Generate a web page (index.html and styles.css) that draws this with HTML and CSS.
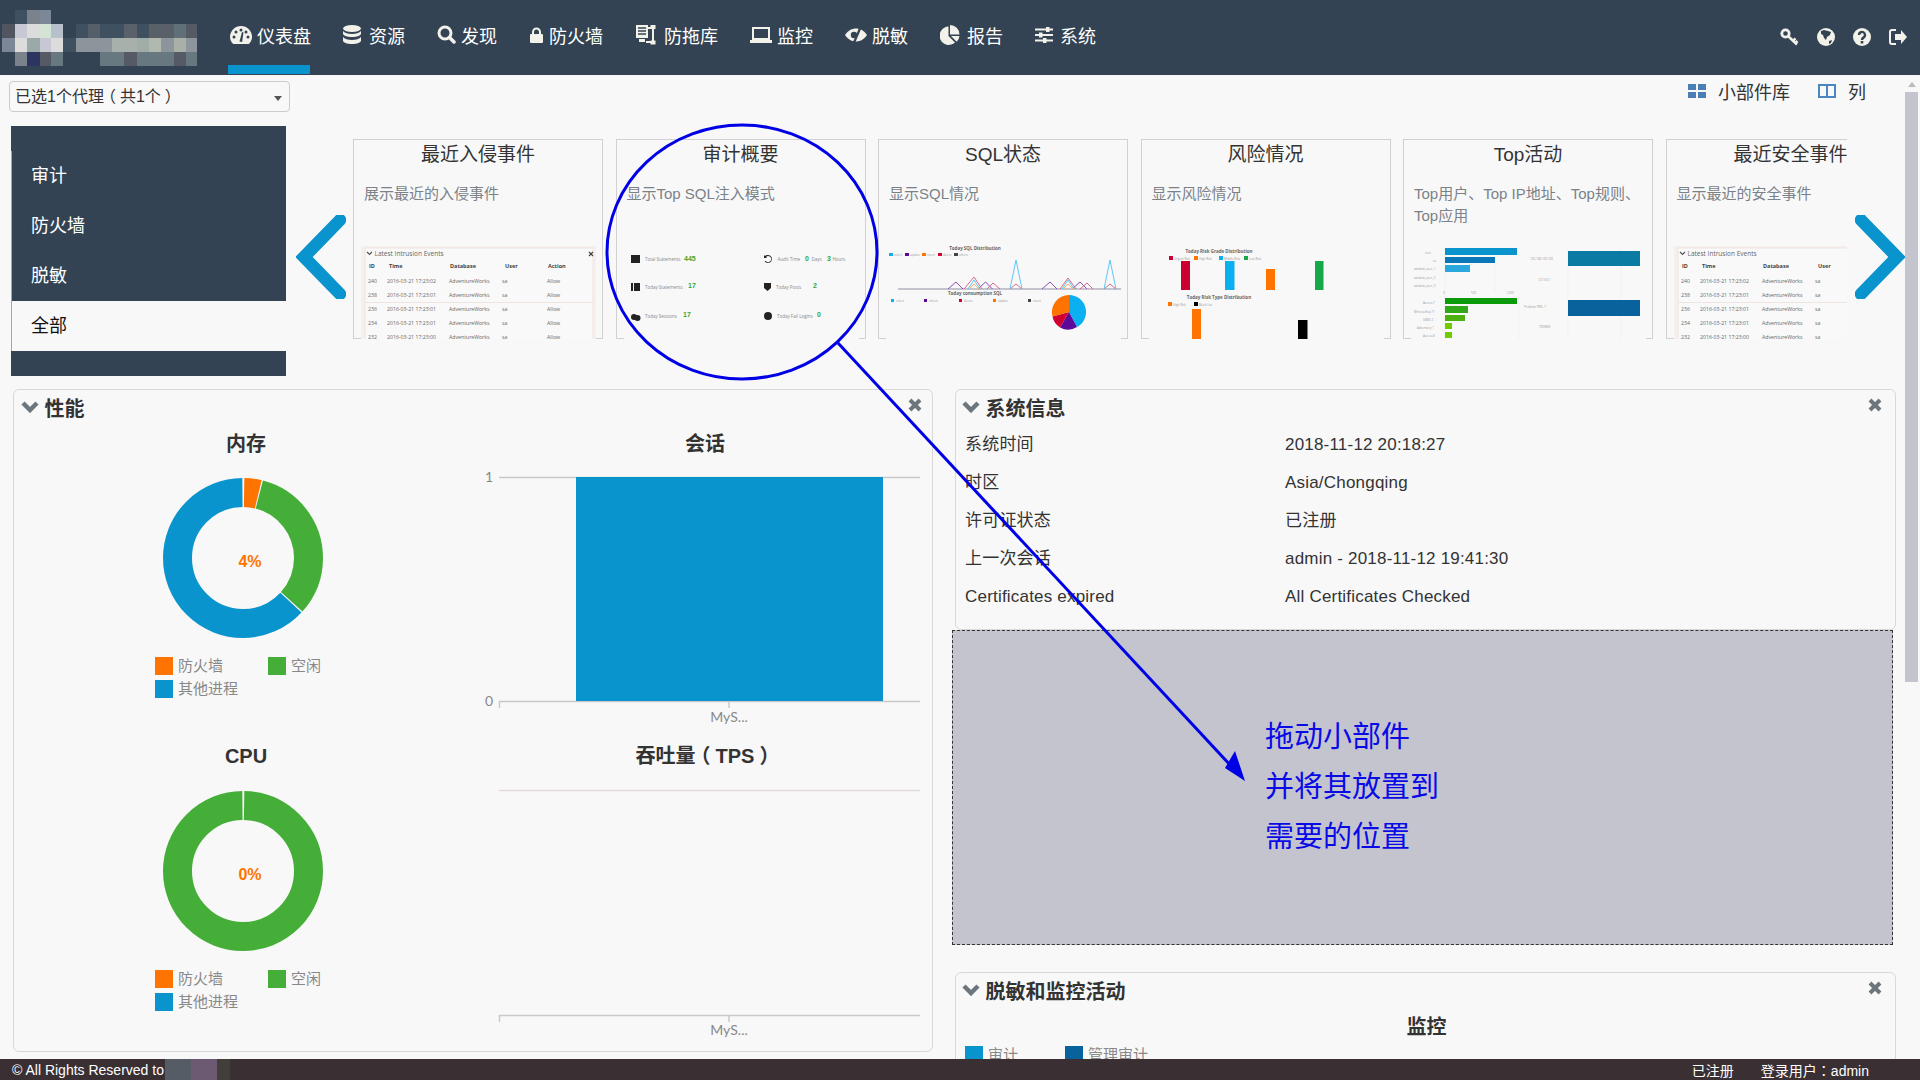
FILE: index.html
```html
<!DOCTYPE html>
<html lang="zh-CN">
<head>
  <meta charset="UTF-8">
  <meta name="viewport" content="width=device-width, initial-scale=1.0">
  <title>仪表盘</title>
  <link rel="stylesheet" href="styles.css">
</head>
<body>
  <header class="topbar">
    <svg class="logo" width="200" height="60" viewBox="0 0 200 60">
      <rect x="15" y="2" width="12" height="14" fill="#3f5060"/><rect x="27" y="2" width="13" height="14" fill="#7a828c"/><rect x="40" y="2" width="11" height="14" fill="#7c8797"/>
      <rect x="2" y="16" width="13" height="14" fill="#51555f"/><rect x="15" y="16" width="12" height="14" fill="#c8c8d4"/><rect x="27" y="16" width="13" height="14" fill="#dcdcdc"/><rect x="40" y="16" width="11" height="14" fill="#d4e4d4"/><rect x="51" y="16" width="12" height="14" fill="#b8c0cc"/>
      <rect x="76" y="16" width="12" height="14" fill="#3f5060"/><rect x="88" y="16" width="12" height="14" fill="#555f6a"/><rect x="100" y="16" width="24" height="14" fill="#3f5060"/><rect x="124" y="16" width="13" height="14" fill="#5a616a"/><rect x="137" y="16" width="12" height="14" fill="#3f5060"/><rect x="149" y="16" width="25" height="14" fill="#5a6068"/><rect x="174" y="16" width="12" height="14" fill="#607078"/><rect x="186" y="16" width="11" height="14" fill="#555a64"/>
      <rect x="2" y="30" width="13" height="14" fill="#7c8696"/><rect x="15" y="30" width="12" height="14" fill="#dcdcdc"/><rect x="27" y="30" width="13" height="14" fill="#9aaaa8"/><rect x="40" y="30" width="11" height="14" fill="#c8c8d4"/><rect x="51" y="30" width="12" height="14" fill="#dcdcdc"/><rect x="63" y="30" width="13" height="14" fill="#3f5060"/>
      <rect x="76" y="30" width="36" height="14" fill="#8c949c"/><rect x="112" y="30" width="25" height="14" fill="#a8b0ac"/><rect x="137" y="30" width="12" height="14" fill="#a0aca8"/><rect x="149" y="30" width="12" height="14" fill="#b0b8b0"/><rect x="161" y="30" width="13" height="14" fill="#8c949c"/><rect x="174" y="30" width="12" height="14" fill="#a8b0a8"/><rect x="186" y="30" width="11" height="14" fill="#8c949c"/>
      <rect x="15" y="44" width="12" height="14" fill="#7a828c"/><rect x="27" y="44" width="13" height="14" fill="#2c3560"/><rect x="40" y="44" width="11" height="14" fill="#555a64"/><rect x="51" y="44" width="12" height="14" fill="#687880"/>
      <rect x="100" y="44" width="24" height="14" fill="#687880"/><rect x="124" y="44" width="13" height="14" fill="#555a64"/><rect x="137" y="44" width="37" height="14" fill="#687880"/><rect x="174" y="44" width="12" height="14" fill="#555a64"/><rect x="186" y="44" width="11" height="14" fill="#687880"/>
    </svg>
    <nav class="nav">
      <a class="nav-item active">
        <svg class="ico" width="22" height="18" viewBox="0 0 22 18"><path d="M3.200 18C1.200 16 0 13.600 0 11a11 11 0 0 1 22 0c0 2.600-1.200 5-3.200 7z"/><g class="cut"><circle cx="4" cy="11" r="1.500"/><circle cx="6" cy="6" r="1.500"/><circle cx="11" cy="4" r="1.500"/><circle cx="16" cy="6" r="1.500"/><circle cx="18" cy="11" r="1.500"/><path d="M9.500 15.500L12 6l1.500.4-1.400 9.600z"/></g></svg>
        仪表盘
      </a>
      <a class="nav-item">
        <svg class="ico" width="21" height="20" viewBox="0 0 21 20"><ellipse cx="9" cy="3.500" rx="9" ry="3.500"/><path d="M0 6v2.500c0 2 4 3.500 9 3.500s9-1.500 9-3.500V6c-1.500 2-5 3-9 3S1.500 8 0 6z"/><path d="M0 12v3.500c0 2 4 3.500 9 3.500s9-1.500 9-3.500V12c-1.500 2-5 3-9 3s-7.500-1-9-3z"/></svg>
        资源
      </a>
      <a class="nav-item">
        <svg class="ico" width="19" height="19" viewBox="0 0 19 19"><circle cx="8" cy="8" r="6" class="line" stroke-width="3"/><path d="M12.500 12.500L17 17" class="line" stroke-width="3.500" stroke-linecap="round"/></svg>
        发现
      </a>
      <a class="nav-item">
        <svg class="ico" width="15" height="16" viewBox="0 0 15 16"><rect x="1" y="7" width="13" height="9" rx="1"/><path d="M4 7V5a3.500 3.500 0 0 1 7 0v2" class="line" stroke-width="2"/></svg>
        防火墙
      </a>
      <a class="nav-item">
        <svg class="ico" width="24" height="22" viewBox="0 0 24 22"><path d="M1 1h12v13H1z"/><path class="cut-line" d="M3 4h8M3 7h8M3 10h8" stroke-width="1.400"/><path d="M13 4h5v14h-7" class="line" stroke-width="2"/><rect x="15.500" y="1" width="5" height="4"/><rect x="15.500" y="16.500" width="5" height="4"/><path d="M4 15h6v3H4z"/></svg>
        防拖库
      </a>
      <a class="nav-item">
        <svg class="ico" width="22" height="16" viewBox="0 0 22 16"><rect x="3" y="1" width="16" height="11" class="line" stroke-width="2"/><rect x="0" y="13" width="22" height="3"/></svg>
        监控
      </a>
      <a class="nav-item">
        <svg class="ico" width="22" height="14" viewBox="0 0 22 14"><path d="M0 7C3 2.500 7 .5 11 .5S19 2.500 22 7c-3 4.500-7 6.500-11 6.500S3 11.500 0 7z"/><g class="cut"><circle cx="9" cy="7" r="3.200"/><path d="M8 14l6-14h2.500l-6 14z"/></g></svg>
        脱敏
      </a>
      <a class="nav-item">
        <svg class="ico" width="22" height="20" viewBox="0 0 22 20"><path d="M8.500 1.500v9.500l6.500 6.500A9.200 9.200 0 1 1 8.500 1.500z"/><path d="M10 0a9.500 9.500 0 0 1 9.500 9.500H10z"/><path d="M11 11h8.500a9 9 0 0 1-2.800 5.700z"/></svg>
        报告
      </a>
      <a class="nav-item">
        <svg class="ico" width="20" height="16" viewBox="0 0 20 16"><path d="M0 2.500h18M0 8h18M0 13.500h18" class="line" stroke-width="2"/><rect x="11" y="0" width="3.500" height="5"/><rect x="4" y="5.500" width="3.500" height="5"/><rect x="8" y="11" width="3.500" height="5"/></svg>
        系统
      </a>
    </nav>
    <div class="top-icons">
      <svg class="ico" width="19" height="18" viewBox="0 0 19 18"><circle cx="5.500" cy="5.500" r="3.700" class="line" stroke-width="2.800"/><path d="M8.500 8.500L17 16.500M13 12.800l2.500-2.500M15.500 15l2-2" class="line" stroke-width="2.500"/></svg>
      <svg class="ico" width="18" height="18" viewBox="0 0 18 18"><circle cx="9" cy="9" r="9"/><path class="cut" d="M4 3l3-1 4 1 3 1-1 3-3 2-1 3-2-2-1-3-2-1zM12 13l3-1-1 3-2 1z"/></svg>
      <svg class="ico" width="18" height="18" viewBox="0 0 18 18"><circle cx="9" cy="9" r="9"/><path class="cut-line" d="M6 7a3 3 0 1 1 4.700 2.400C9.700 10 9 10.600 9 12" stroke-width="2.400"/><rect class="cut" x="7.700" y="13" width="2.600" height="2.500"/></svg>
      <svg class="ico" width="18" height="16" viewBox="0 0 18 16"><path d="M7 1H3a2 2 0 0 0-2 2v10a2 2 0 0 0 2 2h4" class="line" stroke-width="2"/><path d="M6 5h6V1l6 7-6 7v-4H6z"/></svg>
    </div>
  </header>

  <main class="main">
    <div class="toolbar">
      <div class="proxy-select">已选1个代理<span class="p-open">（</span>共1个<span class="p-close">）</span><span class="caret"></span></div>
      <div class="tools">
        <a class="tool">
          <svg width="18" height="14" viewBox="0 0 18 14" fill="#4a7fb5"><rect width="8" height="6"/><rect x="10" width="8" height="6"/><rect y="8" width="8" height="6"/><rect x="10" y="8" width="8" height="6"/></svg>
          小部件库
        </a>
        <a class="tool">
          <svg width="18" height="14" viewBox="0 0 18 14" fill="none" stroke="#4a86c0" stroke-width="2"><rect x="1" y="1" width="16" height="12"/><path d="M9 1v12"/></svg>
          列
        </a>
      </div>
    </div>

    <section class="gallery">
      <div class="side">
        <ul class="side-list">
          <li>审计</li>
          <li>防火墙</li>
          <li>脱敏</li>
          <li class="current">全部</li>
        </ul>
      </div>
      <div class="arrow arrow-prev">
        <svg width="50" height="84" viewBox="0 0 50 84"><path d="M44 5L8 42l36 37" class="chev"/></svg>
      </div>
      <div class="cards">
        <article class="card">
          <h3>最近入侵事件</h3>
          <p>展示最近的入侵事件</p>
          <svg class="thumb" width="235" height="93" viewBox="0 0 235 93">
            <g id="thumb-table">
              <rect x="0" y="0" width="235" height="93" fill="#f6efec"/>
              <rect x="4" y="2" width="228" height="93" fill="#f9f9f9" stroke="#f0e4e0"/>
              <path d="M6 6l2.500 2.500L11 6" fill="none" stroke="#555" stroke-width="1.200"/>
              <text class="mini-title" x="13.500" y="10">Latest Intrusion Events</text>
              <path d="M228 6l4 4M232 6l-4 4" stroke="#444" stroke-width="1.200"/>
              <g class="mini-head">
                <text x="8" y="22">ID</text><text x="28" y="22">Time</text><text x="89" y="22">Database</text><text x="144" y="22">User</text><text x="187" y="22">Action</text>
              </g>
              <g class="mini-row">
                <text x="7" y="37">240</text><text x="26" y="37">2016-03-21 17:23:02</text><text x="88" y="37">AdventureWorks</text><text x="141" y="37">sa</text><text x="186" y="37">Allow</text>
                <text x="7" y="51">238</text><text x="26" y="51">2016-03-21 17:23:01</text><text x="88" y="51">AdventureWorks</text><text x="141" y="51">sa</text><text x="186" y="51">Allow</text>
                <text x="7" y="65">236</text><text x="26" y="65">2016-03-21 17:23:01</text><text x="88" y="65">AdventureWorks</text><text x="141" y="65">sa</text><text x="186" y="65">Allow</text>
                <text x="7" y="79">234</text><text x="26" y="79">2016-03-21 17:23:01</text><text x="88" y="79">AdventureWorks</text><text x="141" y="79">sa</text><text x="186" y="79">Allow</text>
                <text x="7" y="93">232</text><text x="26" y="93">2016-03-21 17:23:00</text><text x="88" y="93">AdventureWorks</text><text x="141" y="93">sa</text><text x="186" y="93">Allow</text>
              </g>
              <path d="M4 56.500H232" stroke="#f0e4e0"/>
            </g>
          </svg>
        </article>
        <article class="card">
          <h3>审计概要</h3>
          <p>显示Top SQL注入模式</p>
          <svg class="thumb" width="235" height="93" viewBox="0 0 235 93">
            <g fill="#222">
              <path d="M7 9h9v8H7z"/><path d="M7 37h2v8H7zM10 37h6v8h-6z"/><circle cx="10" cy="71" r="3"/><circle cx="13.500" cy="72" r="3"/>
              <path d="M144 9a4 4 0 1 1-3.500 6h1.300a3 3 0 1 0 .2-4l1 1h-3v-3l1 1a4 4 0 0 1 3-1z"/><path d="M140 37h7v5l-3.500 3-3.500-3z"/><circle cx="144" cy="70" r="4"/>
            </g>
            <g class="mini-label">
              <text x="21" y="15">Total Statements</text><text x="21" y="43">Today Statements</text><text x="21" y="72">Today Sessions</text>
              <text x="153.500" y="15">Audit Time</text><text x="187.500" y="15">Days</text><text x="208.500" y="15">Hours</text>
              <text x="152" y="43">Today Posts</text><text x="153" y="72">Today Fail Logins</text>
            </g>
            <g class="mini-num">
              <text x="60" y="15">445</text><text x="64" y="42">17</text><text x="59" y="71">17</text>
              <text x="181" y="15">0</text><text x="203" y="15">3</text><text x="189" y="42">2</text><text x="193" y="71">0</text>
            </g>
          </svg>
        </article>
        <article class="card">
          <h3>SQL状态</h3>
          <p>显示SQL情况</p>
          <svg class="thumb" width="235" height="93" viewBox="0 0 235 93">
            <text class="mini-chart" x="89" y="4">Today SQL Distribution</text>
            <g><rect x="3" y="7" width="4" height="3" fill="#0ab0f0"/><rect x="19" y="7" width="4" height="3" fill="#5b0a9c"/><rect x="36" y="7" width="4" height="3" fill="#ff7300"/><rect x="52" y="7" width="4" height="3" fill="#d00030"/><rect x="68" y="7" width="4" height="3" fill="#444"/></g>
            <g class="mini-axis"><text x="8" y="10">select</text><text x="24" y="10">update</text><text x="41" y="10">insert</text><text x="57" y="10">delete</text><text x="73" y="10">others</text></g>
            <path d="M12 43H235" stroke="#c3c4ce" stroke-width="2"/>
            <g fill="none" stroke-width="1">
              <path d="M62 43l8-7 7 7M92 43l7.500-7 7 7M156 43l8-7 7 7M186 43l8-7 7 7" stroke="#8a4fb0"/>
              <path d="M78 43l10-12 8 12M101 43l6-6 7 6M124 43l6-5 6 5M174 43l8-11 8 11M194 43l7-6 6 6M218 43l6-5 6 5" stroke="#d86a8a"/>
              <path d="M124 43l6-29 6 29M218 43l6-29 6 29M82 43l6-9 6 9M176 43l6-9 6 9" stroke="#5cc8f5"/>
              <path d="M83 43l5-5 5 5M177 43l5-5 5 5" stroke="#ffb060"/>
            </g>
            <text class="mini-chart" x="89" y="49">Today consumption SQL</text>
            <g><rect x="5" y="53" width="3" height="3" fill="#0ab0f0"/><rect x="38" y="53" width="3" height="3" fill="#5b0a9c"/><rect x="73" y="53" width="3" height="3" fill="#d00030"/><rect x="107" y="53" width="3" height="3" fill="#ff7300"/><rect x="142" y="53" width="3" height="3" fill="#444"/></g>
            <g class="mini-axis"><text x="10" y="56">select</text><text x="43" y="56">others</text><text x="78" y="56">delete</text><text x="112" y="56">update</text><text x="147" y="56">insert</text></g>
            <path d="M183 66V49a17 17 0 0 1 8 32z" fill="#0ab0f0"/>
            <path d="M183 66l8 15a17 17 0 0 1-17 .5z" fill="#5b0a9c"/>
            <path d="M183 66l-9 15.500a17 17 0 0 1-7.500-11z" fill="#d00030"/>
            <path d="M183 66l-16.500 4.500A17 17 0 0 1 183 49z" fill="#ff7300"/>
          </svg>
        </article>
        <article class="card">
          <h3>风险情况</h3>
          <p>显示风险情况</p>
          <svg class="thumb" width="235" height="93" viewBox="0 0 235 93">
            <text class="mini-chart" x="70" y="7">Today Risk Grade Distribution</text>
            <rect x="20" y="10" width="4" height="4" fill="#cc0030"/><rect x="45" y="10" width="4" height="4" fill="#ff7300"/><rect x="70" y="10" width="4" height="4" fill="#0ab0f0"/><rect x="95" y="10" width="4" height="4" fill="#17a84a"/>
            <g class="mini-axis"><text x="25" y="13.500">Urgent Risk</text><text x="50" y="13.500">High Risk</text><text x="75" y="13.500">Middle Risk</text><text x="100" y="13.500">Low Risk</text></g>
            <rect x="32" y="15" width="9" height="29" fill="#cc0030"/><rect x="76" y="15" width="9.500" height="29" fill="#0ab0f0"/><rect x="117" y="23" width="9" height="21" fill="#ff7300"/><rect x="166" y="15" width="8.500" height="29" fill="#17a84a"/>
            <text class="mini-chart" x="70" y="53">Today Risk Type Distribution</text>
            <rect x="19" y="56" width="4" height="4" fill="#ff7300"/><rect x="45" y="56" width="4" height="4" fill="#000"/>
            <g class="mini-axis"><text x="24" y="59.500">High Risk</text><text x="50" y="59.500">Block List</text></g>
            <rect x="43" y="63" width="9" height="30" fill="#ff7300"/><rect x="149" y="74" width="9.500" height="19" fill="#000"/>
          </svg>
        </article>
        <article class="card">
          <h3>Top活动</h3>
          <p>Top用户、Top IP地址、Top规则、Top应用</p>
          <svg class="thumb" width="235" height="93" viewBox="0 0 235 93">
            <path d="M34 2V93M84 2V46M108 48V93M157 2V93M210 2V93" stroke="#ecece4" stroke-width=".6"/>
            <rect x="34" y="2" width="72" height="7" fill="#0a94ce"/><rect x="34" y="11" width="50" height="6" fill="#0a78b8"/><rect x="34" y="19" width="25" height="7" fill="#2aa8de"/>
            <rect x="34" y="52" width="72" height="6" fill="#0a9a0a"/><rect x="34" y="60" width="23" height="7" fill="#30a818"/><rect x="34" y="69" width="20" height="6" fill="#4cb010"/><rect x="34" y="77" width="7" height="6" fill="#70cc00"/><rect x="34" y="86" width="7" height="6" fill="#70cc00"/>
            <rect x="157" y="5" width="72" height="15" fill="#0a7ca4"/><rect x="157" y="54" width="72" height="16" fill="#08639c"/>
            <g class="mini-axis">
              <text x="14" y="8">root</text><text x="22" y="16">sa</text><text x="3" y="24">window_user_1</text><text x="3" y="33">window_user_2</text><text x="3" y="41">window_user_3</text>
              <text x="32" y="48">0</text><text x="60" y="48">500</text><text x="95" y="48">1,000</text>
              <text x="12" y="58">Access 7</text><text x="3" y="67">Microsoftsq 71</text><text x="12" y="75">SSMS 2</text><text x="6" y="83">Adventury 1</text><text x="12" y="91">Access 8</text>
              <text x="119" y="14">192.168.100.100</text><text x="127" y="35">127.0.0.1</text><text x="113" y="62">Problem PRO. T</text><text x="128" y="82">TEDMSE</text>
            </g>
          </svg>
        </article>
        <article class="card">
          <h3>最近安全事件</h3>
          <p>显示最近的安全事件</p>
          <svg class="thumb" width="235" height="93" viewBox="0 0 235 93"><use href="#thumb-table"/></svg>
        </article>
      </div>
      <div class="arrow arrow-next">
        <svg width="50" height="84" viewBox="0 0 50 84"><path d="M6 5l36 37L6 79" class="chev"/></svg>
      </div>
    </section>

    <section class="board">
      <div class="panel panel-perf">
        <div class="panel-head">
          <svg class="fold" width="18" height="12" viewBox="0 0 18 12"><path d="M2 2l7 7 7-7"/></svg>
          <h2>性能</h2>
          <svg class="close" width="14" height="14" viewBox="0 0 14 14"><path d="M2 2l10 10M12 2L2 12"/></svg>
        </div>
        <div class="perf">
          <div class="perf-col">
            <div class="chart">
              <h4>内存</h4>
              <svg class="donut" width="464" height="160" viewBox="0 0 464 160">
                <g class="ring" transform="rotate(-90 229 80)">
                  <circle cx="229" cy="80" r="65.500" pathLength="360" stroke="#ff7300" stroke-dasharray="12.500 347.500" stroke-dashoffset="-1"/>
                  <circle cx="229" cy="80" r="65.500" pathLength="360" stroke="#44ae38" stroke-dasharray="117.500 242.500" stroke-dashoffset="-14.500"/>
                  <circle cx="229" cy="80" r="65.500" pathLength="360" stroke="#0a94ce" stroke-dasharray="226.500 133.500" stroke-dashoffset="-133"/>
                </g>
                <text class="pct" x="236" y="89">4%</text>
              </svg>
              <ul class="legend legend-grid">
                <li><span class="swatch c-orange"></span>防火墙</li>
                <li><span class="swatch c-green"></span>空闲</li>
                <li><span class="swatch c-blue"></span>其他进程</li>
              </ul>
            </div>
            <div class="chart">
              <h4>CPU</h4>
              <svg class="donut" width="464" height="160" viewBox="0 0 464 160">
                <g class="ring" transform="rotate(-90 229 80)">
                  <circle cx="229" cy="80" r="65.500" pathLength="360" stroke="#44ae38" stroke-dasharray="358.500 1.500" stroke-dashoffset="-1"/>
                </g>
                <text class="pct" x="236" y="89">0%</text>
              </svg>
              <ul class="legend legend-grid">
                <li><span class="swatch c-orange"></span>防火墙</li>
                <li><span class="swatch c-green"></span>空闲</li>
                <li><span class="swatch c-blue"></span>其他进程</li>
              </ul>
            </div>
          </div>
          <div class="perf-col">
            <div class="chart">
              <h4>会话</h4>
              <svg class="bars" width="454" height="285" viewBox="0 0 454 285">
                <path d="M21 22.500H442M21 246.500H442" class="axis"/>
                <path d="M21.500 246v7M251 246v7" class="axis"/>
                <rect x="98" y="22" width="307" height="224" fill="#0a94ce"/>
                <text class="tick" x="7" y="27">1</text>
                <text class="tick" x="7" y="251">0</text>
                <text class="tick mid" x="251" y="267">MyS...</text>
              </svg>
            </div>
            <div class="chart">
              <h4>吞吐量<span class="p-open">（</span>TPS<span class="p-close">）</span></h4>
              <svg class="bars" width="454" height="285" viewBox="0 0 454 285">
                <path d="M21 21.500H442" class="axis pale"/>
                <path d="M21 246.500H442M21.500 246v7M251 246v7" class="axis"/>
                <text class="tick mid" x="251" y="265.500">MyS...</text>
              </svg>
            </div>
          </div>
        </div>
      </div>

      <div class="stack">
        <div class="panel panel-info">
          <div class="panel-head">
            <svg class="fold" width="18" height="12" viewBox="0 0 18 12"><path d="M2 2l7 7 7-7"/></svg>
            <h2>系统信息</h2>
            <svg class="close" width="14" height="14" viewBox="0 0 14 14"><path d="M2 2l10 10M12 2L2 12"/></svg>
          </div>
          <dl class="info">
            <dt>系统时间</dt><dd>2018-11-12 20:18:27</dd>
            <dt>时区</dt><dd>Asia/Chongqing</dd>
            <dt>许可证状态</dt><dd>已注册</dd>
            <dt>上一次会话</dt><dd>admin - 2018-11-12 19:41:30</dd>
            <dt>Certificates expired</dt><dd>All Certificates Checked</dd>
          </dl>
        </div>
        <div class="dropzone">拖动小部件<br>并将其放置到<br>需要的位置</div>
        <div class="panel panel-mask">
          <div class="panel-head">
            <svg class="fold" width="18" height="12" viewBox="0 0 18 12"><path d="M2 2l7 7 7-7"/></svg>
            <h2>脱敏和监控活动</h2>
            <svg class="close" width="14" height="14" viewBox="0 0 14 14"><path d="M2 2l10 10M12 2L2 12"/></svg>
          </div>
          <h4>监控</h4>
          <ul class="legend legend-row">
            <li><span class="swatch c-blue"></span>审计</li>
            <li><span class="swatch c-navy"></span>管理审计</li>
          </ul>
        </div>
      </div>
    </section>
  </main>

  <div class="scrollbar"><span class="scroll-up"></span><span class="scroll-thumb"></span></div>

  <!-- callout drawn over the page -->
  <svg class="callout" width="1920" height="1080" viewBox="0 0 1920 1080">
    <ellipse cx="742" cy="252" rx="135" ry="127"/>
    <path d="M838 343L1232 767"/>
    <path class="head" d="M1245 781L1225 768L1235 751z"/>
  </svg>

  <footer class="footer">
    <span>© All Rights Reserved to</span>
    <span class="blur"><i></i><i></i><i></i></span>
    <span class="foot-right">已注册</span>
    <span class="foot-user">登录用户<span class="tc" lang="zh-TW">：</span>admin</span>
  </footer>
</body>
</html>
```
FILE: styles.css
```css
* {
  box-sizing: border-box;
}

html, body {
  margin: 0;
  height: 100%;
  overflow: hidden;
}

body {
  font-family: "Liberation Sans", "Noto Sans CJK SC", sans-serif;
  background-color: #f8f8f8;
  color: #333;
}

ul {
  list-style: none;
  margin: 0;
  padding: 0;
}

/* centred fullwidth punctuation */
.tc {
  font-family: "Noto Sans CJK TC", sans-serif;
  line-height: 1;
}

.p-open {
  margin: 0 .25em 0 -.25em;
}

.p-close {
  margin: 0 -.25em 0 .25em;
}

/* top bar */
.topbar {
  height: 75px;
  background-color: #334353;
  display: flex;
  align-items: center;
  padding-right: 13px;
}

.logo {
  flex: none;
  margin-right: 30px;
}

.nav {
  display: flex;
  gap: 32px;
  height: 100%;
}

.nav-item {
  position: relative;
  display: flex;
  align-items: center;
  color: #fff;
  font-size: 18px;
  white-space: nowrap;
  padding-bottom: 6px;
}

.nav-item .ico {
  margin-right: 5px;
}

.nav-item.active::after {
  content: "";
  position: absolute;
  left: -2px;
  right: 1px;
  bottom: 1px;
  height: 9px;
  background-color: #0a94ce;
}

.top-icons {
  margin-left: auto;
  display: flex;
  align-items: center;
  gap: 18px;
  padding-bottom: 1px;
  margin-top: -1px;
}

.ico {
  fill: #f2f1ea;
  flex: none;
}

.ico .line {
  fill: none;
  stroke: #f2f1ea;
}

.ico .cut {
  fill: #334353;
}

.ico .cut-line {
  fill: none;
  stroke: #334353;
}

/* toolbar */
.main {
  height: 1005px;
  overflow: hidden;
}

.toolbar {
  display: flex;
  align-items: center;
  margin-top: 6px;
  height: 31px;
  padding-left: 9px;
}

.proxy-select {
  position: relative;
  width: 281px;
  height: 31px;
  line-height: 29px;
  padding-left: 5px;
  font-size: 16px;
  border: 1px solid #ccc;
  border-radius: 4px;
}

.caret {
  position: absolute;
  right: 7px;
  top: 14px;
  border-left: 4px solid transparent;
  border-right: 4px solid transparent;
  border-top: 5px solid #555;
}

.tools {
  margin-left: auto;
  display: flex;
  gap: 28px;
  padding-right: 54px;
  margin-top: -11px;
}

.tool {
  display: flex;
  align-items: center;
  gap: 12px;
  font-size: 18px;
}

/* widget gallery */
.gallery {
  display: flex;
  height: 250px;
  margin-top: 14px;
  padding-left: 11px;
}

.side {
  flex: none;
  width: 275px;
  background-color: #334353;
  padding: 25px 0;
}

.side-list {
  border-left: 1px solid #8dc63f;
}

.side-list li {
  height: 50px;
  line-height: 50px;
  padding-left: 19px;
  font-size: 18px;
  color: #fff;
}

.side-list li.current {
  background-color: #f8f8f8;
  color: #111;
}

.arrow {
  flex: none;
  padding-top: 89px;
}

.arrow-prev {
  width: 67px;
  padding-left: 10px;
}

.arrow-next {
  width: 58px;
  padding-left: 8px;
}

.chev {
  fill: none;
  stroke: #0a94ce;
  stroke-width: 12.500;
  stroke-linecap: round;
  stroke-linejoin: miter;
}

.cards {
  flex: none;
  width: 1494px;
  height: 200px;
  margin-top: 13px;
  display: flex;
  gap: 12.5px;
  overflow: hidden;
}

.card {
  flex: none;
  width: 250px;
  height: 200px;
  border: 1px solid #d0d0d0;
  display: flex;
  flex-direction: column;
}

.card h3 {
  margin: 1px 0 0;
  font-size: 19px;
  font-weight: 400;
  line-height: 28px;
  text-align: center;
}

.card p {
  margin: 14px 0 0;
  padding: 0 10px;
  font-size: 15px;
  line-height: 22px;
  color: #7a8288;
}

.thumb {
  display: block;
  flex: none;
  margin: auto 0 -1px 7px;
  background-color: #f8f8f8;
}

.mini-title, .mini-label, .mini-head, .mini-row, .mini-chart, .mini-axis {
  font-family: "Open Sans", sans-serif;
}

.mini-title {
  font-size: 6.500px;
  fill: #666;
}

.mini-head {
  font-size: 5.500px;
  font-weight: 700;
  fill: #444;
}

.mini-row {
  font-size: 5.200px;
  fill: #666;
}

.mini-label {
  font-size: 4.500px;
  fill: #888;
}

.mini-num {
  font-size: 7px;
  font-weight: 700;
  fill: #3aa53a;
}

.mini-chart {
  font-size: 4.500px;
  font-weight: 700;
  fill: #666;
  text-anchor: middle;
}

.mini-axis {
  font-size: 3px;
  fill: #999;
}

/* panels */
.board {
  display: grid;
  grid-template-columns: 920px 941px;
  column-gap: 22px;
  margin-top: 13px;
  padding-left: 13px;
}

.panel {
  border: 1px solid #d8d8d8;
  border-radius: 6px;
  background-color: #f8f8f8;
}

.panel-perf {
  height: 663px;
}

.panel-info {
  height: 241px;
}

.panel-mask {
  height: 200px;
  margin-top: 27px;
}

.panel-head {
  display: flex;
  align-items: center;
  height: 41px;
  padding: 0 10px 7px 7px;
  gap: 5.500px;
}

.panel-info .panel-head, .panel-mask .panel-head {
  padding-left: 6px;
  padding-right: 13px;
}

.panel-head h2 {
  margin: 0;
  font-size: 20px;
  font-weight: 700;
}

.fold {
  fill: none;
  stroke: #6d767d;
  stroke-width: 4.500;
}

.close {
  margin-left: auto;
  margin-top: -4px;
  fill: none;
  stroke: #6d767d;
  stroke-width: 4;
}

h4 {
  height: 24px;
  margin: 1px 0 -1px;
  font-size: 20px;
  font-weight: 700;
  line-height: 24px;
  text-align: center;
}

.chart + .chart h4 {
  margin: -1.500px 0 1.500px;
}

.panel-mask h4 {
  padding-left: 2px;
}

.perf {
  display: grid;
  grid-template-columns: 464px 454px;
}

.chart {
  height: 313px;
}

.donut {
  display: block;
  margin-top: 23px;
}

.ring circle {
  fill: none;
  stroke-width: 29;
}

.pct {
  font-size: 16px;
  font-weight: 700;
  fill: #ff7300;
  text-anchor: middle;
}

.legend li {
  display: flex;
  align-items: center;
  gap: 5px;
  font-size: 15px;
  line-height: 18px;
  color: #888;
}

.legend-grid {
  display: grid;
  grid-template-columns: 113px auto;
  row-gap: 5px;
  margin: 19px 0 0 141px;
}

.legend-row {
  display: flex;
  margin: 8px 0 0 9px;
}

.legend-row li {
  width: 100px;
}

.swatch {
  flex: none;
  width: 18px;
  height: 18px;
}

.c-orange { background-color: #ff7300; }
.c-green { background-color: #44ae38; }
.c-blue { background-color: #0a94ce; }
.c-navy { background-color: #08639c; }

.bars {
  display: block;
}

.axis {
  fill: none;
  stroke: #c9c9c9;
  stroke-width: 1.500;
}

.axis.pale {
  stroke: #e2d9dd;
}

.tick {
  font-family: "Lato", sans-serif;
  font-size: 14px;
  fill: #888;
}

.tick.mid {
  text-anchor: middle;
}

/* system info */
.info {
  display: grid;
  grid-template-columns: 320px 1fr;
  margin: -5px 0 0 9px;
  font-size: 17px;
  line-height: 38px;
  letter-spacing: .2px;
}

.info dd {
  margin: 0;
}

.dropzone {
  width: 941px;
  height: 315px;
  margin-left: -3px;
  padding: 81px 0 0 312px;
  background-color: #c3c4ce;
  border: 1px dashed #333;
  font-size: 29px;
  line-height: 50px;
  color: #0a0ae6;
}

/* things that lie over the page */
.scrollbar {
  position: fixed;
  left: 1905px;
  top: 82px;
  width: 13px;
}

.scroll-up {
  display: block;
  width: 0;
  margin: 0 auto;
  border-left: 4px solid transparent;
  border-right: 4px solid transparent;
  border-bottom: 5px solid #bbb;
}

.scroll-thumb {
  display: block;
  height: 590px;
  margin-top: 5px;
  background-color: #c3c4ce;
}

.callout {
  position: fixed;
  left: 0;
  top: 0;
  pointer-events: none;
  fill: none;
  stroke: #0000e6;
  stroke-width: 3;
}

.callout .head {
  fill: #0000e6;
  stroke: none;
}

.footer {
  position: fixed;
  left: 0;
  right: 0;
  bottom: 0;
  height: 21px;
  display: flex;
  align-items: center;
  padding: 0 51px 0 12px;
  background-color: #3a3033;
  color: #fff;
  font-size: 14px;
}

.blur {
  display: flex;
  margin-left: 1px;
  height: 21px;
}

.blur i {
  width: 26px;
  background-color: #565c66;
}

.blur i:nth-child(2) {
  background-color: #6c5a72;
}

.blur i:nth-child(3) {
  width: 13px;
  background-color: #423f3b;
}

.foot-right {
  margin-left: auto;
}

.foot-user {
  margin-left: 27px;
}
```
